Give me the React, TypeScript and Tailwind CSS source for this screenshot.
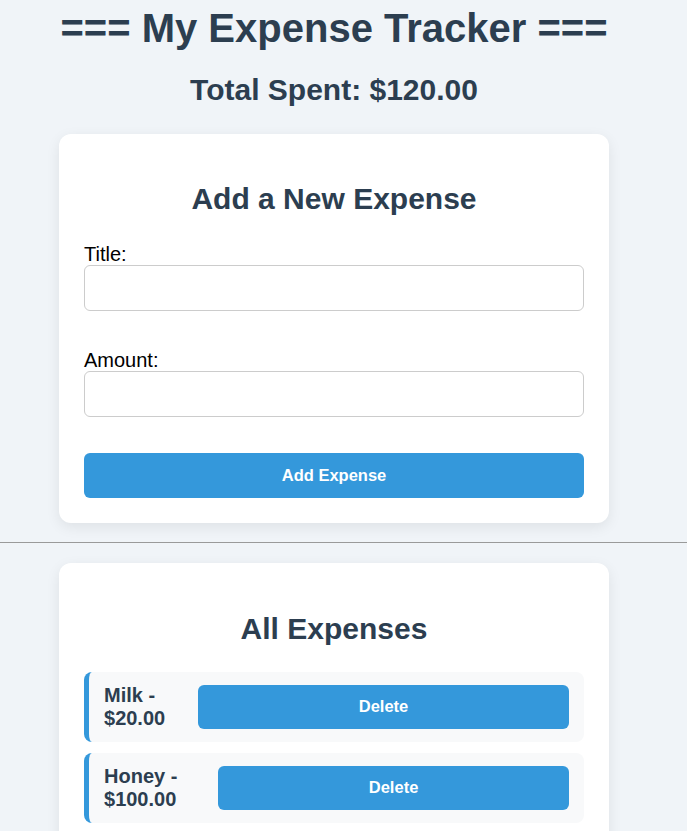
import React from "react";

const expenses = [
  { title: "Milk", amount: 20 },
  { title: "Honey", amount: 100 },
];

export default function App() {
  const total = expenses.reduce((s, e) => s + e.amount, 0);
  return (
    <div className="min-h-screen bg-[#f0f4f8] font-['Liberation_Sans',Arial,sans-serif] text-[#2c3e50]">
      <div className="w-[668px] flex flex-col items-center pt-[5px]">
        <h1 className="text-[40px] leading-[46px] font-bold text-[#2c3e50]">=== My Expense Tracker ===</h1>
        <h2 className="mt-[22px] text-[30px] leading-[34.5px] font-bold text-[#2c3e50]">
          Total Spent: ${total.toFixed(2)}
        </h2>
        <div className="mt-[26px] w-[550px] bg-white rounded-[12px] p-[25px] shadow-[0_4px_14px_rgba(0,0,0,0.08)]">
          <h2 className="mt-[23px] mb-[27px] text-center text-[30px] leading-[34.5px] font-bold text-[#2c3e50]">
            Add a New Expense
          </h2>
          <label className="block text-[20px] leading-[22px] text-black">Title:</label>
          <input className="block w-full h-[46px] border border-[#ccc] rounded-[6px] bg-white" />
          <label className="block mt-[38px] text-[20px] leading-[22px] text-black">Amount:</label>
          <input className="block w-full h-[46px] border border-[#ccc] rounded-[6px] bg-white" />
          <button className="mt-[36px] w-full h-[45px] bg-[#3498db] text-white font-bold text-[16.5px] rounded-[6px]">
            Add Expense
          </button>
        </div>
      </div>
      <hr className="mt-[19px] mb-5 border-0 border-t border-[#9a9a9a]" />
      <div className="w-[668px] flex flex-col items-center">
        <div className="w-[550px] bg-white rounded-[12px] p-[25px] shadow-[0_4px_14px_rgba(0,0,0,0.08)]">
          <h2 className="mt-[24px] mb-[25px] text-center text-[30px] leading-[34.5px] font-bold text-[#2c3e50]">
            All Expenses
          </h2>
          <div className="flex flex-col gap-[11px]">
            {expenses.map((e) => (
              <div
                key={e.title}
                className="flex items-center h-[70px] bg-[#f8f9fa] rounded-[8px] border-l-[5px] border-[#3498db] px-[15px]"
              >
                <span className="font-bold text-[20px] leading-[23px] text-[#2c3e50]">
                  {e.title} - ${e.amount.toFixed(2)}
                </span>
                <button className="w-full h-[44px] bg-[#3498db] text-white font-bold text-[16.5px] rounded-[6px]">
                  Delete
                </button>
              </div>
            ))}
          </div>
        </div>
      </div>
    </div>
  );
}
